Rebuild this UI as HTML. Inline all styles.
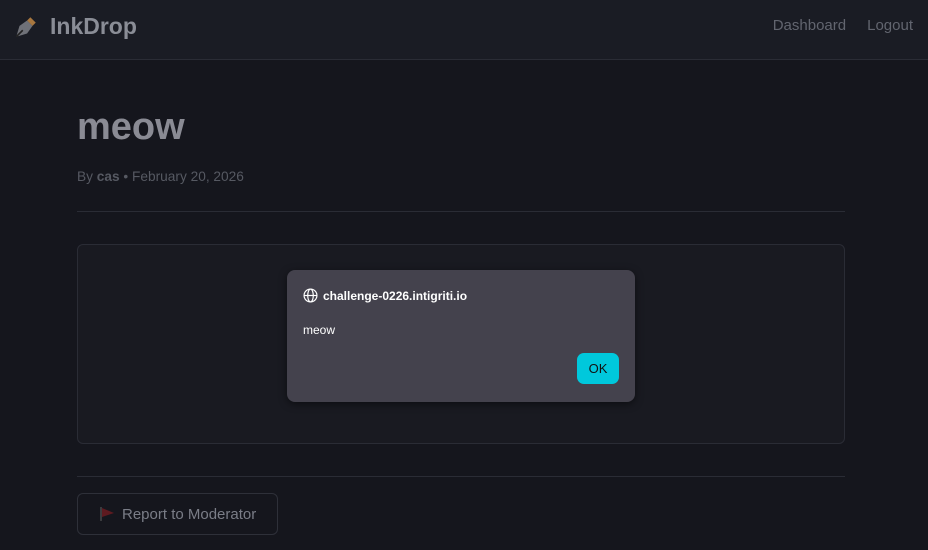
<!DOCTYPE html>
<html><head><style>
*{margin:0;padding:0;box-sizing:border-box}
body{width:928px;height:550px;overflow:hidden;background:#15161d;font-family:"Liberation Sans",sans-serif;position:relative}
.nav{position:absolute;left:0;top:0;width:928px;height:60px;background:#1a1c24;border-bottom:1px solid #2a2c35}
.logo{position:absolute;left:50px;top:13px;font-size:23px;font-weight:bold;color:#8a8d96}
.links{position:absolute;right:15px;top:17px;font-size:15px;color:#62656f}
.links span{margin-left:21px}
h1{position:absolute;left:77px;top:106px;font-size:38px;font-weight:bold;color:#8a8b94}
.meta{position:absolute;left:77px;top:169px;font-size:13.7px;color:#565962}
.hr{position:absolute;left:77px;width:768px;height:1px;background:#2a2c35}
.box{position:absolute;left:77px;top:244px;width:768px;height:200px;border:1px solid #2a2c35;border-radius:6px;background:#191a21}
.dlg{position:absolute;left:287px;top:270px;width:348px;height:132px;background:#44424d;border-radius:8px;box-shadow:0 2px 8px rgba(0,0,0,.5);color:#fff}
.ok{position:absolute;left:290px;top:83px;width:42px;height:31px;background:#00c8dc;border-radius:7px;color:#111;font-size:13px;text-align:center;line-height:31px}
.btn{position:absolute;left:77px;top:493px;width:201px;height:42px;border:1px solid #2e3039;border-radius:6px;color:#7a7d87;font-size:15px}
</style></head><body>
<div class="nav">
<svg style="position:absolute;left:13px;top:14px" width="26" height="26" viewBox="0 0 24 24"><path d="M3 21 L6 11 L13 6 L18 11 L13 18 Z" fill="#6f7178"/><path d="M13 6 L16 3 L21 8 L18 11 Z" fill="#a8773f"/><path d="M3 21 L9 15" stroke="#222" stroke-width="1.5"/></svg>
<div class="logo">InkDrop</div>
<div class="links"><span>Dashboard</span><span>Logout</span></div>
</div>
<h1>meow</h1>
<div class="meta">By <b>cas</b> • February 20, 2026</div>
<div class="hr" style="top:211px"></div>
<div class="box"></div>
<div class="dlg">
<svg style="position:absolute;left:16px;top:18px" width="15" height="15" viewBox="0 0 14 14" fill="none" stroke="#fff" stroke-width="1.1"><circle cx="7" cy="7" r="6"/><ellipse cx="7" cy="7" rx="2.6" ry="6"/><path d="M1 7h12"/></svg>
<div style="position:absolute;left:36px;top:19px;font-size:12px;font-weight:bold">challenge-0226.intigriti.io</div>
<div style="position:absolute;left:16px;top:53px;font-size:12px">meow</div>
<div class="ok">OK</div>
</div>
<div class="hr" style="top:476px"></div>
<div class="btn">
<svg style="position:absolute;left:22px;top:13px" width="16" height="14" viewBox="0 0 16 14"><path d="M1 0v14" stroke="#555" stroke-width="1.2"/><path d="M2 1 L14 6 L2 10 Z" fill="#5e1a20"/></svg>
<span style="position:absolute;left:44px;top:12px">Report to Moderator</span>
</div>
</body></html>
